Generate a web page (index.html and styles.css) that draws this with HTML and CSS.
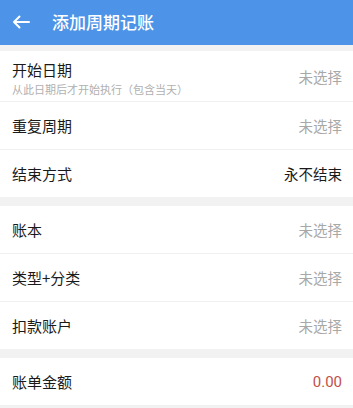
FILE: index.html
```html
<!DOCTYPE html>
<html lang="zh">
<head>
<meta charset="utf-8">
<link rel="stylesheet" href="styles.css">
</head>
<body>
<header class="bar">
  <svg class="back" width="18" height="14" viewBox="0 0 18 14"><path d="M17 7H2M7.5 1.5L2 7l5.5 5.5" fill="none" stroke="#fff" stroke-width="2" stroke-linecap="round" stroke-linejoin="round"/></svg>
  <span class="title">添加周期记账</span>
</header>
<div class="gap first"></div>
<section class="group">
  <div class="row tall">
    <div class="label">
      <div class="main">开始日期</div>
      <div class="sub">从此日期后才开始执行（包含当天）</div>
    </div>
    <div class="value muted">未选择</div>
  </div>
  <div class="row"><div class="main">重复周期</div><div class="value muted">未选择</div></div>
  <div class="row last"><div class="main">结束方式</div><div class="value">永不结束</div></div>
</section>
<div class="gap"></div>
<section class="group">
  <div class="row"><div class="main">账本</div><div class="value muted">未选择</div></div>
  <div class="row"><div class="main">类型+分类</div><div class="value muted">未选择</div></div>
  <div class="row last"><div class="main">扣款账户</div><div class="value muted">未选择</div></div>
</section>
<div class="gap"></div>
<section class="group">
  <div class="row"><div class="main">账单金额</div><div class="value red">0.00</div></div>
</section>
</body>
</html>
```
FILE: styles.css
```css
html, body {
  margin: 0;
  padding: 0;
  background: #f2f2f2;
  font-family: "Noto Sans CJK SC", "Noto Sans", sans-serif;
  overflow: hidden;
}
.bar {
  height: 45px;
  background: #4d93e7;
  display: flex;
  align-items: center;
  color: #fff;
}
.back {
  margin-left: 12px;
  margin-top: -2px;
}
.title {
  margin-left: 22px;
  font-size: 17px;
  font-weight: 500;
  margin-top: -2px;
}
.gap {
  height: 9px;
}
.gap.first {
  height: 6px;
}
.group {
  background: #fff;
}
.row {
  height: 47px;
  display: flex;
  align-items: center;
  justify-content: space-between;
  padding: 0 11px 0 12px;
  border-bottom: 1px solid #f0f0f0;
}
.row.last {
  border-bottom: none;
  height: 47px;
}
.row.tall {
  height: 50px;
}
.label {
  padding-top: 3px;
}
.main {
  font-size: 15px;
  color: #1a1a1a;
  line-height: 20px;
}
.sub {
  font-size: 11px;
  color: #b0b0b0;
  line-height: 14px;
  margin-top: 2px;
}
.value {
  font-size: 14.5px;
  color: #1a1a1a;
}
.value.muted {
  color: #a8a8a8;
}
.value.red {
  color: #c2504b;
  font-family: "Roboto", "Noto Sans", sans-serif;
  font-size: 15px;
}
```
